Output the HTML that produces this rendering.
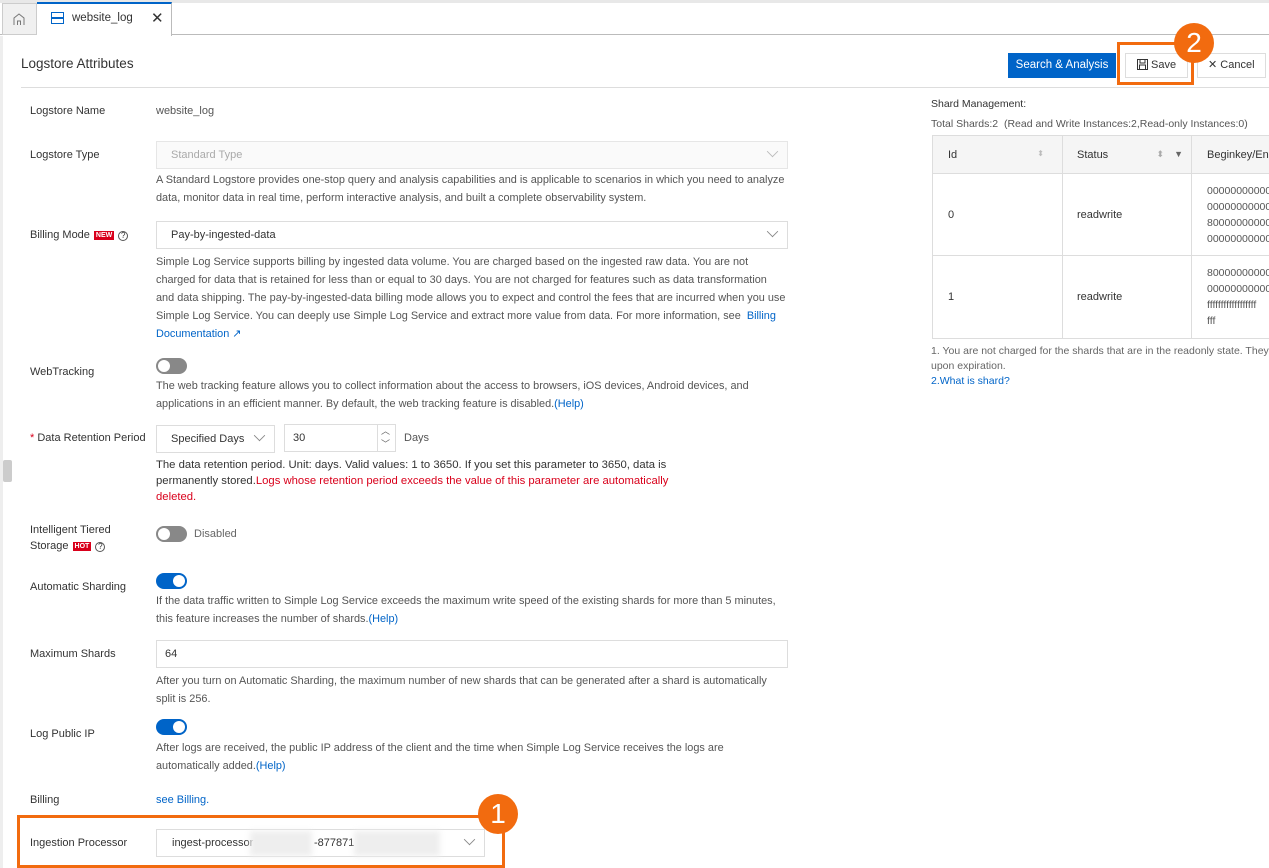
<!DOCTYPE html>
<html><head><meta charset="utf-8">
<style>
*{box-sizing:border-box;margin:0;padding:0}
body{width:1269px;height:868px;overflow:hidden;background:#fff;font-family:"Liberation Sans",sans-serif;font-size:11px;color:#333;position:relative}
.a{position:absolute}
.lbl{position:absolute;left:30px;font-size:11px;color:#333}
.desc{position:absolute;left:156px;width:630px;font-size:10.9px;line-height:18px;color:#555}
.link{color:#0064c8}
.input{position:absolute;border:1px solid #ddd;background:#fff;height:28px;font-size:11px;padding:0 14px;line-height:26px}
.chev{position:absolute;right:10px;width:9px;height:9px;border-right:1px solid #888;border-bottom:1px solid #888;transform:rotate(45deg) scale(.9);top:5px}
.tog{position:absolute;left:156px;width:31px;height:16px;border-radius:8px;background:#888}
.tog::after{content:"";position:absolute;top:2px;left:2px;width:12px;height:12px;border-radius:50%;background:#fff}
.tog.on{background:#0064c8}.tog.on::after{left:17px}
.badge{display:inline-block;background:#d9001b;color:#fff;font-size:7px;line-height:9px;font-weight:bold;padding:0 2px;vertical-align:1px;margin-left:4px}
.q{display:inline-block;width:10px;height:10px;border:1px solid #555;border-radius:50%;font-size:8px;line-height:8px;text-align:center;margin-left:4px;vertical-align:0}
.orange{position:absolute;border:3px solid #f26b0f}
.circ{position:absolute;width:40px;height:40px;border-radius:50%;background:#f26b0f;color:#fff;font-size:28px;text-align:center;line-height:40px}
table{border-collapse:collapse}
td,th{border:1px solid #ddd;font-weight:normal;text-align:left;font-size:11px}
</style></head><body>
<div class="a" style="left:0;top:0;width:1269px;height:3px;background:#e8e8e8"></div>
<div class="a" style="left:0;top:34px;width:1269px;height:1px;background:#bbb"></div>
<div class="a" style="left:2px;top:3px;width:35px;height:32px;background:#f0f0f0;border:1px solid #ccc"></div>
<svg class="a" style="left:12px;top:12px" width="14" height="14" viewBox="0 0 14 14"><path d="M2 13V6L7 2l5 4v7M5.5 13V9h3v4" fill="none" stroke="#777" stroke-width="1"/></svg>
<div class="a" style="left:37px;top:2px;width:135px;height:34px;background:#fff;border-top:2px solid #0064c8;border-right:1px solid #bbb"></div>
<svg class="a" style="left:51px;top:12px" width="13" height="12" viewBox="0 0 13 12"><rect x="0.5" y="0.5" width="12" height="5" fill="none" stroke="#0064c8"/><rect x="0.5" y="6.5" width="12" height="5" fill="none" stroke="#0064c8"/></svg>
<div class="a" style="left:72px;top:12px;font-size:11.5px;color:#333">website_log</div>
<div class="a" style="left:151px;top:9px;font-size:15px;color:#333">✕</div>
<div class="a" style="left:0;top:36px;width:3px;height:832px;background:#eee"></div>
<div class="a" style="left:3px;top:460px;width:9px;height:22px;background:#ccc;border-radius:2px"></div>
<div class="a" style="left:21px;top:56px;font-size:13.5px;color:#333">Logstore Attributes</div>
<div class="a" style="left:21px;top:87px;width:1248px;height:1px;background:#ddd"></div>
<div class="a" style="left:1008px;top:53px;width:108px;height:25px;background:#0064c8;color:#fff;font-size:11.5px;text-align:center;line-height:25px">Search &amp; Analysis</div>
<div class="a" style="left:1125px;top:53px;width:63px;height:25px;border:1px solid #ddd;font-size:11px;line-height:23px;padding-left:11px">
<svg style="vertical-align:-2px" width="11" height="11" viewBox="0 0 11 11"><rect x=".5" y=".5" width="10" height="10" fill="none" stroke="#333"/><rect x="3" y=".5" width="5" height="3.5" fill="none" stroke="#333"/><rect x="2.5" y="6" width="6" height="4.5" fill="none" stroke="#333"/></svg> Save</div>
<div class="a" style="left:1197px;top:53px;width:69px;height:25px;border:1px solid #ddd;font-size:11px;line-height:23px;padding-left:10px">✕ Cancel</div>
<div class="orange" style="left:1117px;top:42px;width:77px;height:43px"></div>
<div class="circ" style="left:1174px;top:23px">2</div>

<div class="lbl" style="top:105px">Logstore Name</div>
<div class="a" style="left:156px;top:105px;color:#555">website_log</div>

<div class="lbl" style="top:149px">Logstore Type</div>
<div class="input" style="left:156px;top:141px;width:632px;color:#aaa;background:#fafafa;border-color:#e6e6e6">Standard Type<div class="chev" style="border-color:#bbb"></div></div>
<div class="desc" style="top:171px">A Standard Logstore provides one-stop query and analysis capabilities and is applicable to scenarios in which you need to analyze data, monitor data in real time, perform interactive analysis, and built a complete observability system.</div>

<div class="lbl" style="top:229px">Billing Mode<span class="badge">NEW</span><span class="q">?</span></div>
<div class="input" style="left:156px;top:221px;width:632px">Pay-by-ingested-data<div class="chev"></div></div>
<div class="desc" style="top:253px">Simple Log Service supports billing by ingested data volume. You are charged based on the ingested raw data. You are not charged for data that is retained for less than or equal to 30 days. You are not charged for features such as data transformation and data shipping. The pay-by-ingested-data billing mode allows you to expect and control the fees that are incurred when you use Simple Log Service. You can deeply use Simple Log Service and extract more value from data. For more information, see &nbsp;<span class="link">Billing Documentation ↗</span></div>

<div class="lbl" style="top:366px">WebTracking</div>
<div class="tog" style="top:358px"></div>
<div class="desc" style="top:377px">The web tracking feature allows you to collect information about the access to browsers, iOS devices, Android devices, and applications in an efficient manner. By default, the web tracking feature is disabled.<span class="link">(Help)</span></div>

<div class="lbl" style="top:432px"><span style="color:#d9001b">* </span>Data Retention Period</div>
<div class="input" style="left:156px;top:425px;width:119px">Specified Days<div class="chev"></div></div>
<div class="input" style="left:284px;top:424px;width:112px;padding-left:8px">30</div>
<div class="a" style="left:377px;top:425px;width:1px;height:27px;background:#ddd"></div>
<div class="a" style="left:378px;top:425px;font-size:9px;color:#666;line-height:13px;padding-left:3px">︿<br>﹀</div>
<div class="a" style="left:404px;top:432px;color:#555">Days</div>
<div class="desc" style="top:457px;width:545px;color:#333;font-size:11.3px;line-height:16px">The data retention period. Unit: days. Valid values: 1 to 3650. If you set this parameter to 3650, data is permanently stored.<span style="color:#d9001b">Logs whose retention period exceeds the value of this parameter are automatically deleted.</span></div>

<div class="lbl" style="top:522px;line-height:16px">Intelligent Tiered<br>Storage<span class="badge">HOT</span><span class="q">?</span></div>
<div class="tog" style="top:526px"></div>
<div class="a" style="left:194px;top:528px;color:#666">Disabled</div>

<div class="lbl" style="top:581px">Automatic Sharding</div>
<div class="tog on" style="top:573px"></div>
<div class="desc" style="top:592px">If the data traffic written to Simple Log Service exceeds the maximum write speed of the existing shards for more than 5 minutes, this feature increases the number of shards.<span class="link">(Help)</span></div>

<div class="lbl" style="top:648px">Maximum Shards</div>
<div class="input" style="left:156px;top:640px;width:632px;padding-left:8px">64</div>
<div class="desc" style="top:672px">After you turn on Automatic Sharding, the maximum number of new shards that can be generated after a shard is automatically split is 256.</div>

<div class="lbl" style="top:728px">Log Public IP</div>
<div class="tog on" style="top:719px"></div>
<div class="desc" style="top:739px">After logs are received, the public IP address of the client and the time when Simple Log Service receives the logs are automatically added.<span class="link">(Help)</span></div>

<div class="lbl" style="top:794px">Billing</div>
<div class="a link" style="left:156px;top:794px">see Billing.</div>

<div class="lbl" style="top:837px">Ingestion Processor</div>
<div class="input" style="left:156px;top:829px;width:329px;padding-left:15px">ingest-processor<div class="chev"></div></div>
<div class="a" style="left:250px;top:831px;width:62px;height:25px;background:#eee;filter:blur(3px)"></div>
<div class="a" style="left:314px;top:837px">-877871</div>
<div class="a" style="left:354px;top:831px;width:86px;height:25px;background:#eee;filter:blur(3px)"></div>
<div class="orange" style="left:17px;top:815px;width:488px;height:53px"></div>
<div class="circ" style="left:478px;top:794px">1</div>

<div class="a" style="left:931px;top:98px;font-size:10.5px;color:#333">Shard Management:</div>
<div class="a" style="left:931px;top:118px;font-size:10.5px;color:#555">Total Shards:2&nbsp; (Read and Write Instances:2,Read-only Instances:0)</div>
<table class="a" style="left:932px;top:135px;width:350px">
<tr style="height:38px;background:#f5f5f5"><th style="width:130px;padding-left:15px">Id <span style="float:right;margin-right:18px;color:#bbb;font-size:8px">⬍</span></th><th style="width:129px;padding-left:14px">Status <span style="float:right;margin-right:8px;color:#aaa;font-size:9px">⬍&nbsp;&nbsp;&nbsp;&nbsp;<span style="color:#666">▼</span></span></th><th style="padding-left:15px">Beginkey/End</th></tr>
<tr style="height:82px"><td style="padding-left:15px">0</td><td style="padding-left:14px">readwrite</td><td style="padding-left:15px;font-size:10.5px;line-height:16px;color:#555">00000000000<br>00000000000<br>80000000000<br>00000000000</td></tr>
<tr style="height:83px"><td style="padding-left:15px">1</td><td style="padding-left:14px">readwrite</td><td style="padding-left:15px;font-size:10.5px;line-height:16px;color:#555">80000000000<br>00000000000<br>ffffffffffffffffff<br>fff</td></tr>
</table>
<div class="a" style="left:931px;top:344px;font-size:10.5px;line-height:15px;color:#666;white-space:nowrap">1. You are not charged for the shards that are in the readonly state. They<br>upon expiration.<br><span class="link">2.What is shard?</span></div>
</body></html>
